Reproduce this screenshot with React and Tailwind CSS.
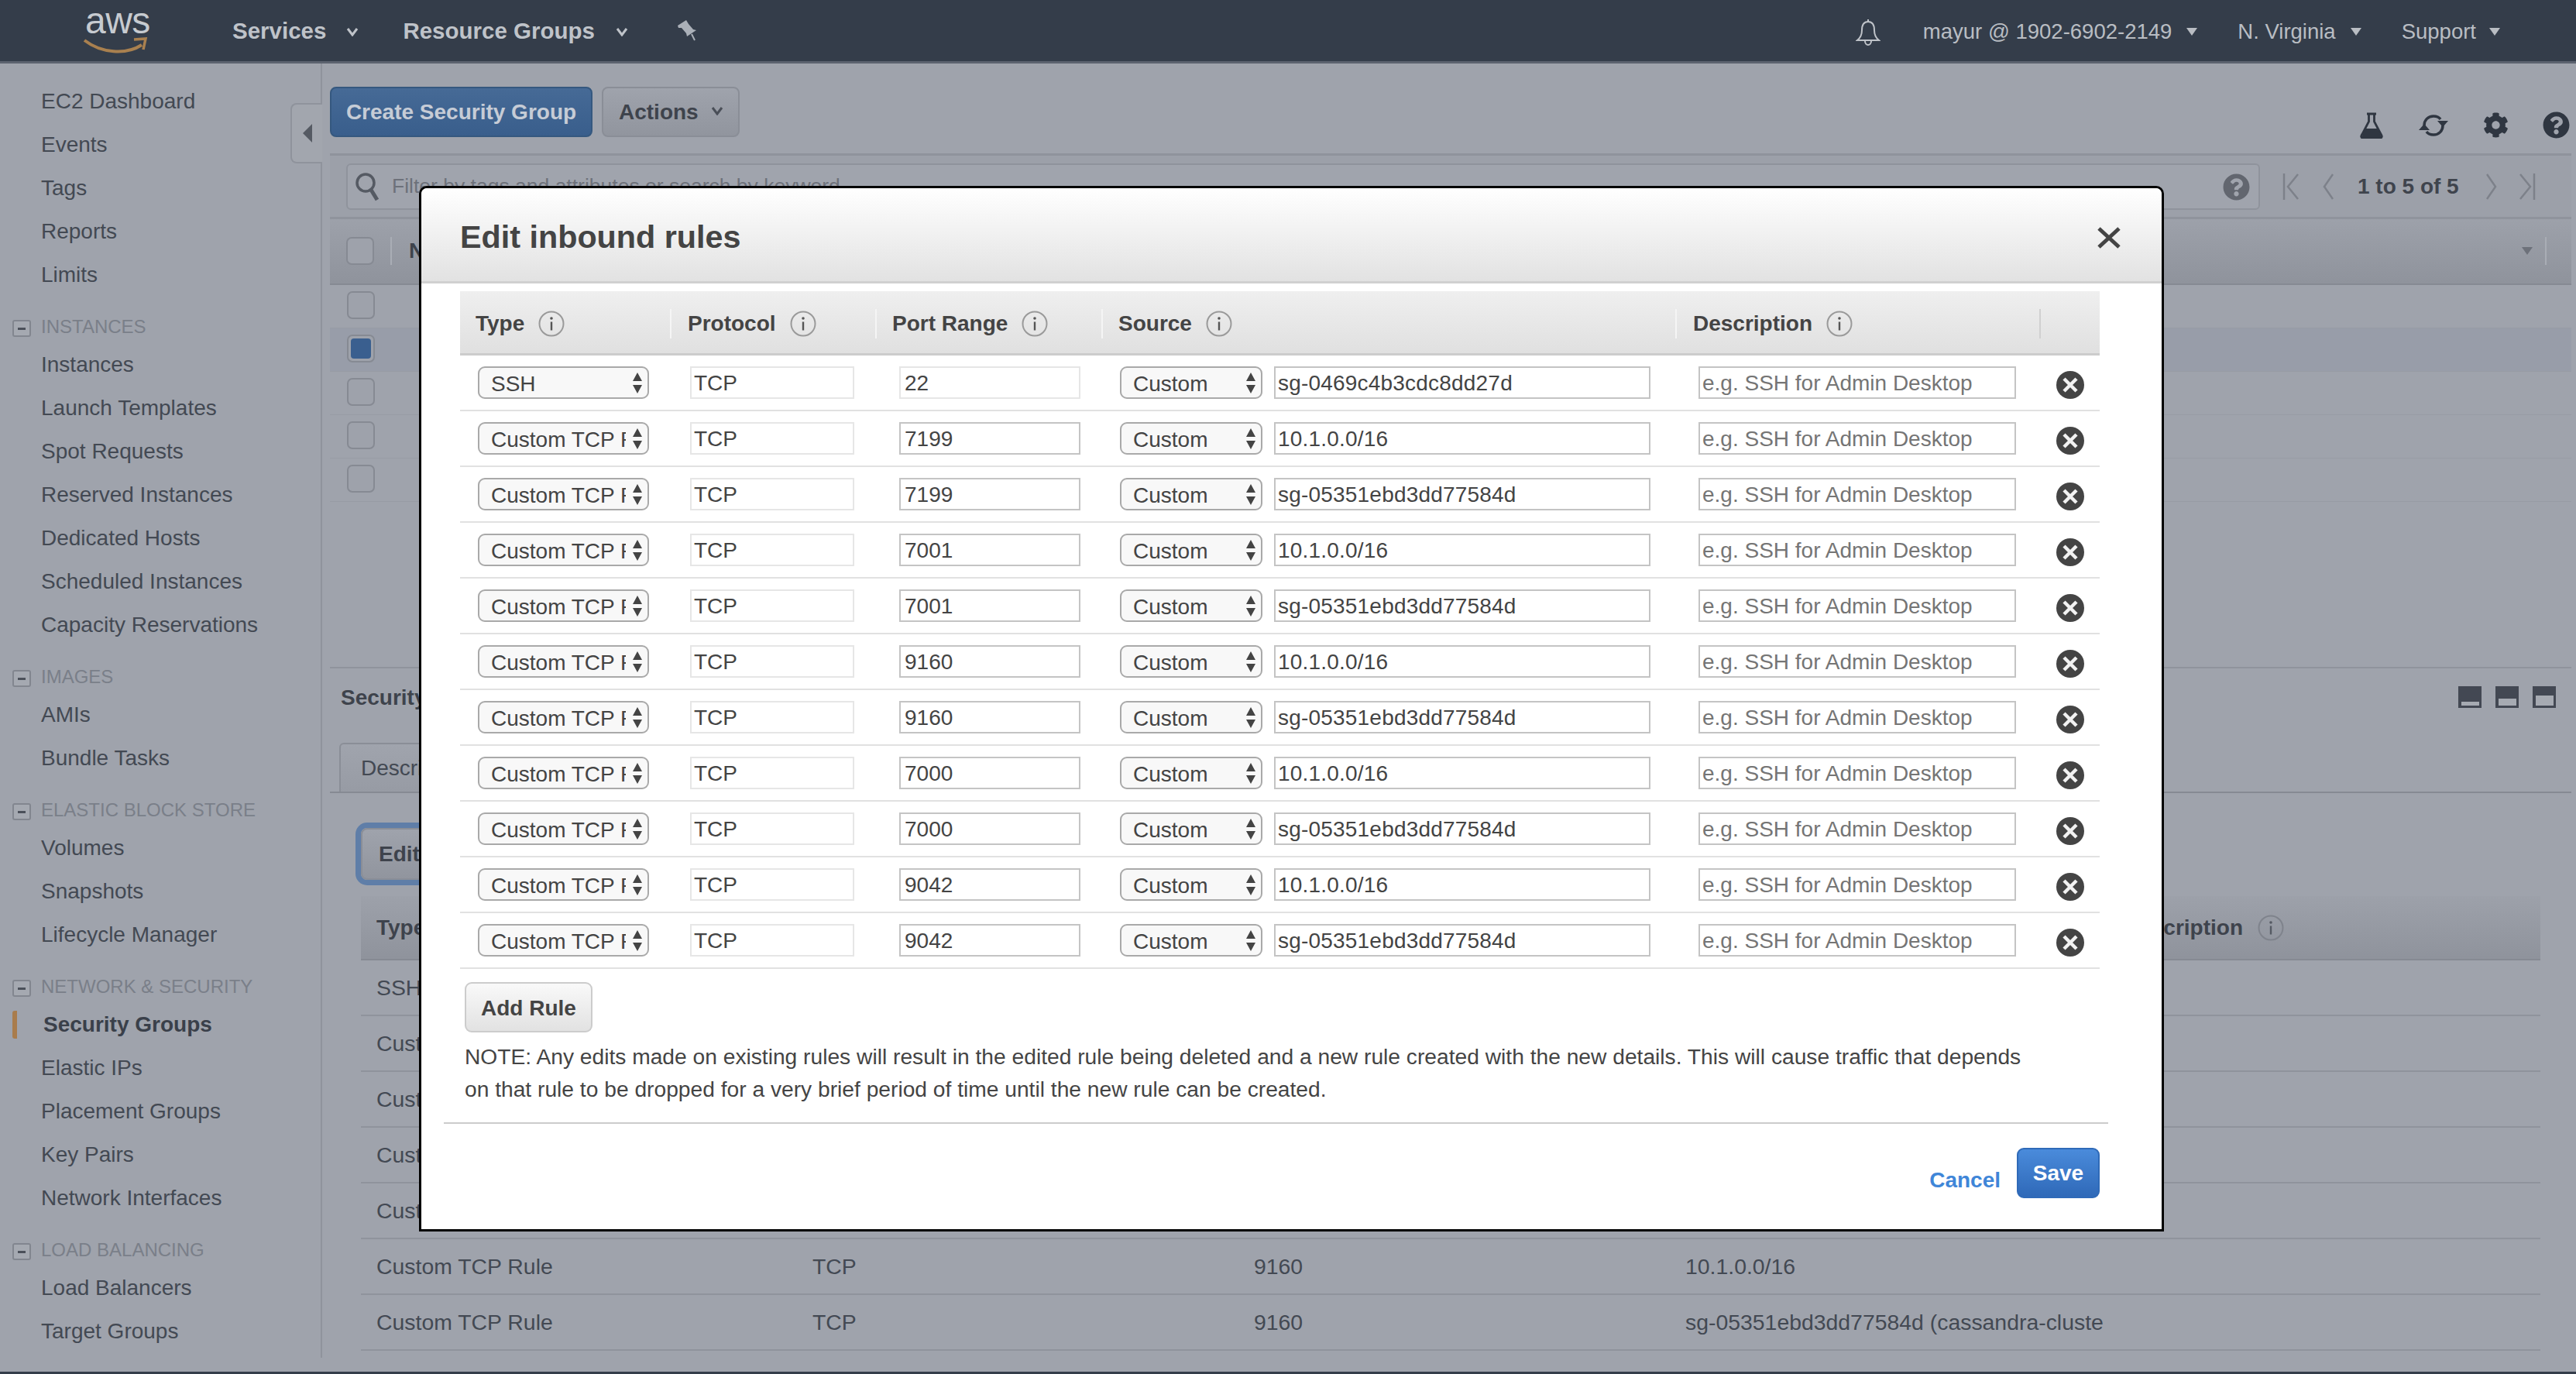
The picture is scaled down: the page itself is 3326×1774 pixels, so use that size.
import React from "react";
import { FaCog, FaQuestionCircle } from "react-icons/fa";

const rules = [
  ["SSH", "22", "sg-0469c4b3cdc8dd27d"],
  ["Custom TCP Rule", "7199", "10.1.0.0/16"],
  ["Custom TCP Rule", "7199", "sg-05351ebd3dd77584d"],
  ["Custom TCP Rule", "7001", "10.1.0.0/16"],
  ["Custom TCP Rule", "7001", "sg-05351ebd3dd77584d"],
  ["Custom TCP Rule", "9160", "10.1.0.0/16"],
  ["Custom TCP Rule", "9160", "sg-05351ebd3dd77584d"],
  ["Custom TCP Rule", "7000", "10.1.0.0/16"],
  ["Custom TCP Rule", "7000", "sg-05351ebd3dd77584d"],
  ["Custom TCP Rule", "9042", "10.1.0.0/16"],
  ["Custom TCP Rule", "9042", "sg-05351ebd3dd77584d"],
];

const sideNav = [
  { items: ["EC2 Dashboard", "Events", "Tags", "Reports", "Limits"] },
  { title: "INSTANCES", items: ["Instances", "Launch Templates", "Spot Requests", "Reserved Instances", "Dedicated Hosts", "Scheduled Instances", "Capacity Reservations"] },
  { title: "IMAGES", items: ["AMIs", "Bundle Tasks"] },
  { title: "ELASTIC BLOCK STORE", items: ["Volumes", "Snapshots", "Lifecycle Manager"] },
  { title: "NETWORK & SECURITY", items: ["Security Groups", "Elastic IPs", "Placement Groups", "Key Pairs", "Network Interfaces"] },
  { title: "LOAD BALANCING", items: ["Load Balancers", "Target Groups"] },
];

function Caret({ className = "" }) {
  return (
    <svg viewBox="0 0 16 12" className={`w-4 h-3 ${className}`}>
      <path d="M2 2l6 8 6-8" fill="none" stroke="currentColor" strokeWidth="3" />
    </svg>
  );
}

function SmallCaret({ className = "" }) {
  return (
    <svg viewBox="0 0 14 10" className={`w-[14px] h-[10px] ${className}`}>
      <path d="M0 0h14L7 10z" fill="currentColor" />
    </svg>
  );
}

function InfoIcon({ dim }) {
  return (
    <svg viewBox="0 0 34 34" className="w-[34px] h-[34px] shrink-0">
      <circle cx="17" cy="17" r="15.5" fill="none" stroke={dim ? "#7f838c" : "#9a9a9a"} strokeWidth="2" />
      <circle cx="17" cy="10" r="1.8" fill={dim ? "#555a63" : "#555"} />
      <path d="M17 14.5v11" stroke={dim ? "#555a63" : "#555"} strokeWidth="2.4" />
    </svg>
  );
}

function RemoveIcon() {
  return (
    <svg viewBox="0 0 36 36" className="w-[36px] h-[36px] shrink-0 mt-[6px]">
      <circle cx="18" cy="18" r="18" fill="#444" />
      <path d="M10 10l16 16M26 10L10 26" stroke="#f2f2f2" strokeWidth="4.500" />
    </svg>
  );
}

function Checkbox({ checked }) {
  return (
    <div className="w-[36px] h-[36px] rounded-[7px] border-2 border-[#868a93] bg-[#9ea2ab] flex items-center justify-center">
      {checked && <div className="w-[26px] h-[26px] rounded-[4px] bg-[#3a5f8f]" />}
    </div>
  );
}

function Select({ value, options, width }) {
  return (
    <div className={`relative h-[42px] shrink-0 ${width}`}>
      <select
        defaultValue={value}
        className="appearance-none w-full h-full rounded-[9px] border-2 border-[#a9a9a9] bg-[#f8f8f8] pl-[15px] pr-[28px] text-[28px] text-[#444] outline-none"
      >
        {options.map((o) => (
          <option key={o}>{o}</option>
        ))}
      </select>
      <svg viewBox="0 0 14 28" className="absolute right-[8px] top-[7px] w-[14px] h-[28px]">
        <path d="M7 1l6 11H1zM1 17h12L7 28z" fill="#444" />
      </svg>
    </div>
  );
}

function Field({ value, placeholder, width, light, readOnly = true }) {
  return (
    <input
      readOnly={readOnly}
      defaultValue={value}
      placeholder={placeholder}
      className={`h-[42px] shrink-0 border-2 bg-white pl-[3px] pt-[2px] text-[28px] text-[#444] placeholder:text-[#757575] outline-none ${width} ${light ? "border-[#e6e6e6]" : "border-[#c4c4c4]"}`}
    />
  );
}

function RuleRow({ rule, first }) {
  return (
    <div className="flex items-center h-[72px] border-b-2 border-[#e1e1e1] pl-[23px]">
      <Select value={rule[0]} options={["SSH", "Custom TCP Rule"]} width="w-[221px]" />
      <div className="ml-[53px]">
        <Field value="TCP" width="w-[212px]" light />
      </div>
      <div className="ml-[58px]">
        <Field value={rule[1]} width="w-[234px] pl-[5px]" light={first} />
      </div>
      <div className="ml-[51px]">
        <Select value="Custom" options={["Custom", "Anywhere", "My IP"]} width="w-[184px]" />
      </div>
      <div className="ml-[15px]">
        <Field value={rule[2]} width="w-[486px] tracking-[0.2px]" />
      </div>
      <div className="ml-[62px]">
        <Field placeholder="e.g. SSH for Admin Desktop" width="w-[410px]" />
      </div>
      <div className="ml-[52px]">
        <RemoveIcon />
      </div>
    </div>
  );
}

function RulesHeader() {
  const cols = [
    ["Type", "w-[271px] pl-[20px]"],
    ["Protocol", "w-[265px] pl-[21px] border-l-2 border-[#f5f5f5]"],
    ["Port Range", "w-[292px] pl-[20px] border-l-2 border-[#f5f5f5]"],
    ["Source", "w-[741px] pl-[20px] border-l-2 border-[#f5f5f5]"],
    ["Description", "w-[470px] pl-[21px] border-l-2 border-[#f5f5f5]"],
  ];
  return (
    <div className="flex items-center h-[83px] pt-[3px] bg-gradient-to-b from-[#efefef] to-[#e0e0e0] border-b-[3px] border-[#cccccc]">
      {cols.map(([label, cls]) => (
        <div key={label} className={`flex items-center gap-[18px] h-[38px] font-bold text-[28px] text-[#444] ${cls}`}>
          {label}
          <InfoIcon />
        </div>
      ))}
      <div className="h-[38px] border-l-2 border-[#d0d0d0]" />
    </div>
  );
}

function EditModal() {
  return (
    <div className="absolute left-[541px] top-[240px] w-[2253px] h-[1350px] bg-white border-[3px] border-black rounded-t-[10px] flex flex-col">
      <div className="flex items-center justify-between h-[123px] shrink-0 pl-[50px] pr-[53px] pt-[8px] rounded-t-[8px] bg-gradient-to-b from-white to-[#e2e2e2] border-b-[3px] border-[#d0d0d0]">
        <h2 className="font-bold text-[41.3px] text-[#444]">Edit inbound rules</h2>
        <svg viewBox="0 0 30 28" className="w-[30px] h-[28px]">
          <path d="M2 2l26 24M28 2L2 26" stroke="#444" strokeWidth="5" />
        </svg>
      </div>
      <div className="mt-[10px] mx-[50px] w-[2117px]">
        <RulesHeader />
        {rules.map((r, i) => (
          <RuleRow key={i} rule={r} first={i === 0} />
        ))}
        <button className="ml-[6px] mt-[17px] block w-[165px] h-[65px] pt-[2px] rounded-[9px] border-2 border-[#cccccc] bg-gradient-to-b from-[#f9f9f9] to-[#e2e2e2] font-bold text-[28px] text-[#444]">
          Add Rule
        </button>
        <p className="ml-[6px] mt-[10px] w-[2040px] text-[28.2px] leading-[42px] text-[#444]">
          NOTE: Any edits made on existing rules will result in the edited rule being deleted and a new rule created with the new details. This will cause traffic that depends on that rule to be dropped for a very brief period of time until the new rule can be created.
        </p>
      </div>
      <div className="ml-[29px] mt-[22px] w-[2149px] border-t-2 border-[#cccccc]" />
      <div className="ml-[50px] mt-[31px] w-[2117px] flex justify-end items-start gap-[21px]">
        <a className="mt-[22px] font-bold text-[28px] leading-[40px] text-[#3f86d8]">Cancel</a>
        <button className="w-[107px] h-[65px] rounded-[9px] border-2 border-[#2f6ab8] bg-gradient-to-b from-[#4a8bdb] to-[#2f69b8] font-bold text-[28px] text-white">
          Save
        </button>
      </div>
    </div>
  );
}

function TopNav() {
  return (
    <nav className="h-[82px] shrink-0 bg-[#343d4a] border-b-[3px] border-[#5c636f] pt-[2px] flex items-center text-[#bfc3c9]">
      <div className="relative w-[110px] h-[64px] ml-[107px] shrink-0">
        <span className="absolute left-[3px] top-[-6px] text-[48px] leading-[48px] tracking-[-0.5px] text-[#c7cbd0]">aws</span>
        <svg viewBox="0 0 84 24" className="absolute left-0 top-[39px] w-[84px] h-[24px]">
          <path d="M2 4c22 17 54 19 74 6" fill="none" stroke="#a9804f" strokeWidth="4" />
          <path d="M66 3l15-1-3 14" fill="none" stroke="#a9804f" strokeWidth="3.5" />
        </svg>
      </div>
      <div className="ml-[83px] flex items-center font-bold text-[29.5px]">
        <span>Services</span>
        <Caret className="ml-[26px]" />
        <span className="ml-[57px]">Resource Groups</span>
        <Caret className="ml-[27px]" />
        <svg viewBox="0 0 28 30" className="ml-[62px] w-[28px] h-[30px] -mt-[4px]">
          <path d="M2 9l11-7 3 5 6 7 4 1-12 8-1-4-6-7H3z" fill="#aab0b8" />
          <path d="M20 20l4 8" stroke="#aab0b8" strokeWidth="2" />
        </svg>
      </div>
      <div className="ml-auto flex items-center text-[27.5px] text-[#b9bdc3]">
        <svg viewBox="0 0 32 36" className="w-[32px] h-[36px] mr-[55px]">
          <path d="M16 2v3M16 5c-6 0-8 5-8 11 0 5-2 10-6 13h28c-4-3-6-8-6-13 0-6-2-11-8-11zM12 30c0 3 2 5 4 5s4-2 4-5" fill="none" stroke="#bfc3c9" strokeWidth="2" />
        </svg>
        <span>mayur @ 1902-6902-2149</span>
        <SmallCaret className="ml-[19px]" />
        <span className="ml-[52px]">N. Virginia</span>
        <SmallCaret className="ml-[19px]" />
        <span className="ml-[52px]">Support</span>
        <SmallCaret className="ml-[17px] mr-[98px]" />
      </div>
    </nav>
  );
}

function Sidebar() {
  return (
    <aside className="w-[416px] h-[1671px] shrink-0 border-r-2 border-[#8f939c] pt-[21px] text-[28px] text-[#434953]">
      {sideNav.map((group, g) => (
        <div key={g}>
          {group.title && (
            <div className="mt-[21px] mb-[3px] h-[36px] flex items-center pl-[16px] text-[24px] text-[#7a7f89]">
              <span className="w-[24px] h-[22px] mt-[4px] mr-[13px] rounded-[3px] border-2 border-[#82868f] bg-[#a5a9b1] flex items-center justify-center">
                <span className="block w-[10px] h-[3px] bg-[#4b505a]" />
              </span>
              {group.title}
            </div>
          )}
          {group.items.map((item) => {
            const active = item === "Security Groups";
            return (
              <div key={item} className="relative h-[56px] flex items-center pl-[53px]">
                {active && <div className="absolute left-[16px] top-[10px] w-[6px] h-[36px] rounded-l-[3px] bg-[#a97c4c]" />}
                <span className={active ? "font-bold text-[#3a404a] ml-[3px]" : ""}>{item}</span>
              </div>
            );
          })}
        </div>
      ))}
    </aside>
  );
}

function Flask() {
  return (
    <svg viewBox="0 0 32 34" className="w-[32px] h-[34px]">
      <path d="M10 2h12M12.5 2v10L3 30a2 2 0 0 0 2 3h22a2 2 0 0 0 2-3l-9.500-18V2" fill="none" stroke="#2f3641" strokeWidth="2.800" />
      <path d="M8 21h16l5 12H3z" fill="#2f3641" />
    </svg>
  );
}

function Refresh() {
  return (
    <svg viewBox="0 0 40 34" className="w-[40px] h-[34px]">
      <path d="M8 17c0-7 5-12 12-12 4 0 7 1 9 4M32 17c0 7-5 12-12 12-4 0-7-1-9-4" fill="none" stroke="#2f3641" strokeWidth="3.500" />
      <path d="M32 19l-7-8h14zM8 15l-7 8h14z" fill="#2f3641" />
    </svg>
  );
}

function PagerArrow({ d, w }) {
  return (
    <svg viewBox={`0 0 ${w} 34`} className="h-[34px]" style={{ width: w }}>
      <path d={d} fill="none" stroke="#7d818a" strokeWidth="2.500" />
    </svg>
  );
}

function UpperPanel() {
  return (
    <>
      <div className="flex items-start pt-[30px]">
        <button className="w-[339px] h-[65px] rounded-[8px] border-2 border-[#35587f] bg-gradient-to-b from-[#466a96] to-[#395e8c] font-bold text-[28px] text-[#c6ccd6]">
          Create Security Group
        </button>
        <button className="ml-[12px] w-[178px] h-[65px] rounded-[8px] border-2 border-[#8a8e97] bg-gradient-to-b from-[#9fa3ac] to-[#91959e] font-bold text-[28px] text-[#3e434c] flex items-center pl-[20px]">
          Actions
          <Caret className="ml-[16px] mb-[4px] text-[#4a4f58]" />
        </button>
        <div className="ml-auto mt-[32px] flex items-center gap-[44px] text-[#2f3641] pr-[2px]">
          <Flask />
          <Refresh />
          <FaCog size={33} />
          <FaQuestionCircle size={35} />
        </div>
      </div>
      <div className="mt-[19px] h-[85px] border-y-[3px] border-[#8f939c] bg-[#9ca0a9] flex items-center pl-[21px] overflow-hidden">
        <div className="w-[2471px] h-[60px] rounded-[6px] border-2 border-[#8f939c] bg-[#a0a4ad] flex items-center pl-[8px] relative">
          <svg viewBox="0 0 34 40" className="w-[34px] h-[40px]">
            <circle cx="15" cy="15" r="11" fill="none" stroke="#555a63" strokeWidth="3.500" />
            <path d="M22 24l8 13" stroke="#555a63" strokeWidth="5" />
          </svg>
          <span className="ml-[15px] text-[26.5px] text-[#6d717a]">Filter by tags and attributes or search by keyword</span>
          <div className="absolute right-[11px] top-[11px] text-[#62666f]">
            <FaQuestionCircle size={35} />
          </div>
        </div>
        <div className="ml-[29px]">
          <PagerArrow w={23} d="M2 0v34M20 1L7 17l13 16" />
        </div>
        <div className="ml-[29px]">
          <PagerArrow w={14} d="M13 1L2 17l11 16" />
        </div>
        <span className="ml-[31px] font-bold text-[28px] text-[#3f444d]">1 to 5 of 5</span>
        <div className="ml-[35px]">
          <PagerArrow w={14} d="M1 1l11 16L1 33" />
        </div>
        <div className="ml-[27px]">
          <PagerArrow w={23} d="M21 0v34M3 1l13 16L3 33" />
        </div>
      </div>
      <div className="h-[85px] pb-[2px] bg-gradient-to-b from-[#9da1aa] to-[#8f939c] border-b-2 border-[#868a93] flex items-center pl-[21px]">
        <Checkbox />
        <div className="ml-[21px] h-[36px] border-l-2 border-[#a9adb5]" />
        <span className="ml-[22px] font-bold text-[28px] text-[#3e434c]">Name</span>
        <SmallCaret className="ml-auto mr-[16px] text-[#6d717a]" />
        <div className="mr-[32px] h-[36px] border-l-2 border-[#a9adb5]" />
      </div>
      {[0, 1, 2, 3, 4].map((i) => (
        <div key={i} className={`h-[56px] pb-[4px] flex items-center pl-[22px] border-b border-[#979ba4] ${i === 1 ? "bg-[#989da9]" : ""}`}>
          <Checkbox checked={i === 1} />
        </div>
      ))}
    </>
  );
}

const lowerRows = [
  ["SSH", "TCP", "22", "sg-0469c4b3cdc8dd27d"],
  ["Custom TCP Rule", "TCP", "7199", "10.1.0.0/16"],
  ["Custom TCP Rule", "TCP", "7199", "sg-05351ebd3dd77584d"],
  ["Custom TCP Rule", "TCP", "7001", "10.1.0.0/16"],
  ["Custom TCP Rule", "TCP", "7001", "sg-05351ebd3dd77584d"],
  ["Custom TCP Rule", "TCP", "9160", "10.1.0.0/16"],
  ["Custom TCP Rule", "TCP", "9160", "sg-05351ebd3dd77584d (cassandra-cluste"],
];

function PanelSizeIcon({ inset }) {
  return (
    <div className="w-[30px] h-[28px] bg-[#434853] flex flex-col justify-end items-center pb-[3px]">
      <div className={`w-[23px] bg-[#a6aab2] ${inset}`} />
    </div>
  );
}

function LowerPanel() {
  return (
    <>
      <div className="mt-[213px] border-t-2 border-[#8f939c] h-[78px] flex items-center pl-[14px]">
        <span className="font-bold text-[28px] text-[#3e434c]">Security Group: sg-05351ebd3dd77584d</span>
        <div className="ml-auto mr-[20px] mb-[2px] flex gap-[18px]">
          <PanelSizeIcon inset="h-[5px]" />
          <PanelSizeIcon inset="h-[9px]" />
          <PanelSizeIcon inset="h-[13px]" />
        </div>
      </div>
      <div className="mt-[22px] h-[63px] border-b-2 border-[#868a93] pl-[12px] flex items-end">
        <div className="h-[63px] w-[220px] rounded-t-[6px] border-2 border-b-0 border-[#8a8e97] bg-gradient-to-b from-[#a0a4ad] to-[#979ba4] flex items-center pl-[26px] text-[28px] text-[#434953]">
          Description
        </div>
      </div>
      <div className="ml-[40px] mr-[40px] mt-[45px]">
        <button className="block w-[320px] h-[67px] rounded-[8px] border-2 border-[#8a8e97] ring-[7px] ring-[#5f7ea8] bg-gradient-to-b from-[#9fa3ac] to-[#91959e] font-bold text-[28px] text-[#3e434c] text-left pl-[21px]">
          Edit inbound rules
        </button>
        <div className="mt-[21px] h-[83px] bg-gradient-to-b from-[#9da1aa] to-[#8f939c] border-b-2 border-[#868a93] grid grid-cols-[562px_570px_557px_567px_1fr] items-center pl-[20px] font-bold text-[28px] text-[#3e434c]">
          <span>Type</span>
          <span>Protocol</span>
          <span>Port Range</span>
          <span>Source</span>
          <span className="flex items-center gap-[19px]">
            Description
            <InfoIcon dim />
          </span>
        </div>
        {lowerRows.map((r, i) => (
          <div key={i} className="h-[72px] border-b-2 border-[#8f939c] grid grid-cols-[563px_570px_557px_567px_1fr] items-center pl-[20px] text-[28.4px] text-[#434953]">
            {r.map((c, j) => (
              <span key={j}>{c}</span>
            ))}
          </div>
        ))}
      </div>
    </>
  );
}

export default function App() {
  return (
    <div className="relative w-[3326px] h-[1774px] overflow-hidden bg-[#9fa3ac] flex flex-col font-['Liberation_Sans',Arial,sans-serif]">
      <TopNav />
      <div className="flex flex-1 min-h-0">
        <Sidebar />
        <main className="relative flex-1 min-w-0 pl-[10px] pr-[6px]">
          {/* sidebar collapse tab */}
          <div className="absolute left-[-41px] top-[51px] w-[41px] h-[78px] rounded-l-[8px] border-2 border-r-0 border-[#8f939c] bg-[#a2a6ae] flex items-center justify-center">
            <svg viewBox="0 0 12 24" className="w-[12px] h-[24px]">
              <path d="M12 0v24L0 12z" fill="#555a63" />
            </svg>
          </div>
          <UpperPanel />
          <LowerPanel />
        </main>
      </div>
      <div className="absolute left-0 right-0 bottom-0 h-[3px] bg-[#343d4a]" />
      <EditModal />
    </div>
  );
}
